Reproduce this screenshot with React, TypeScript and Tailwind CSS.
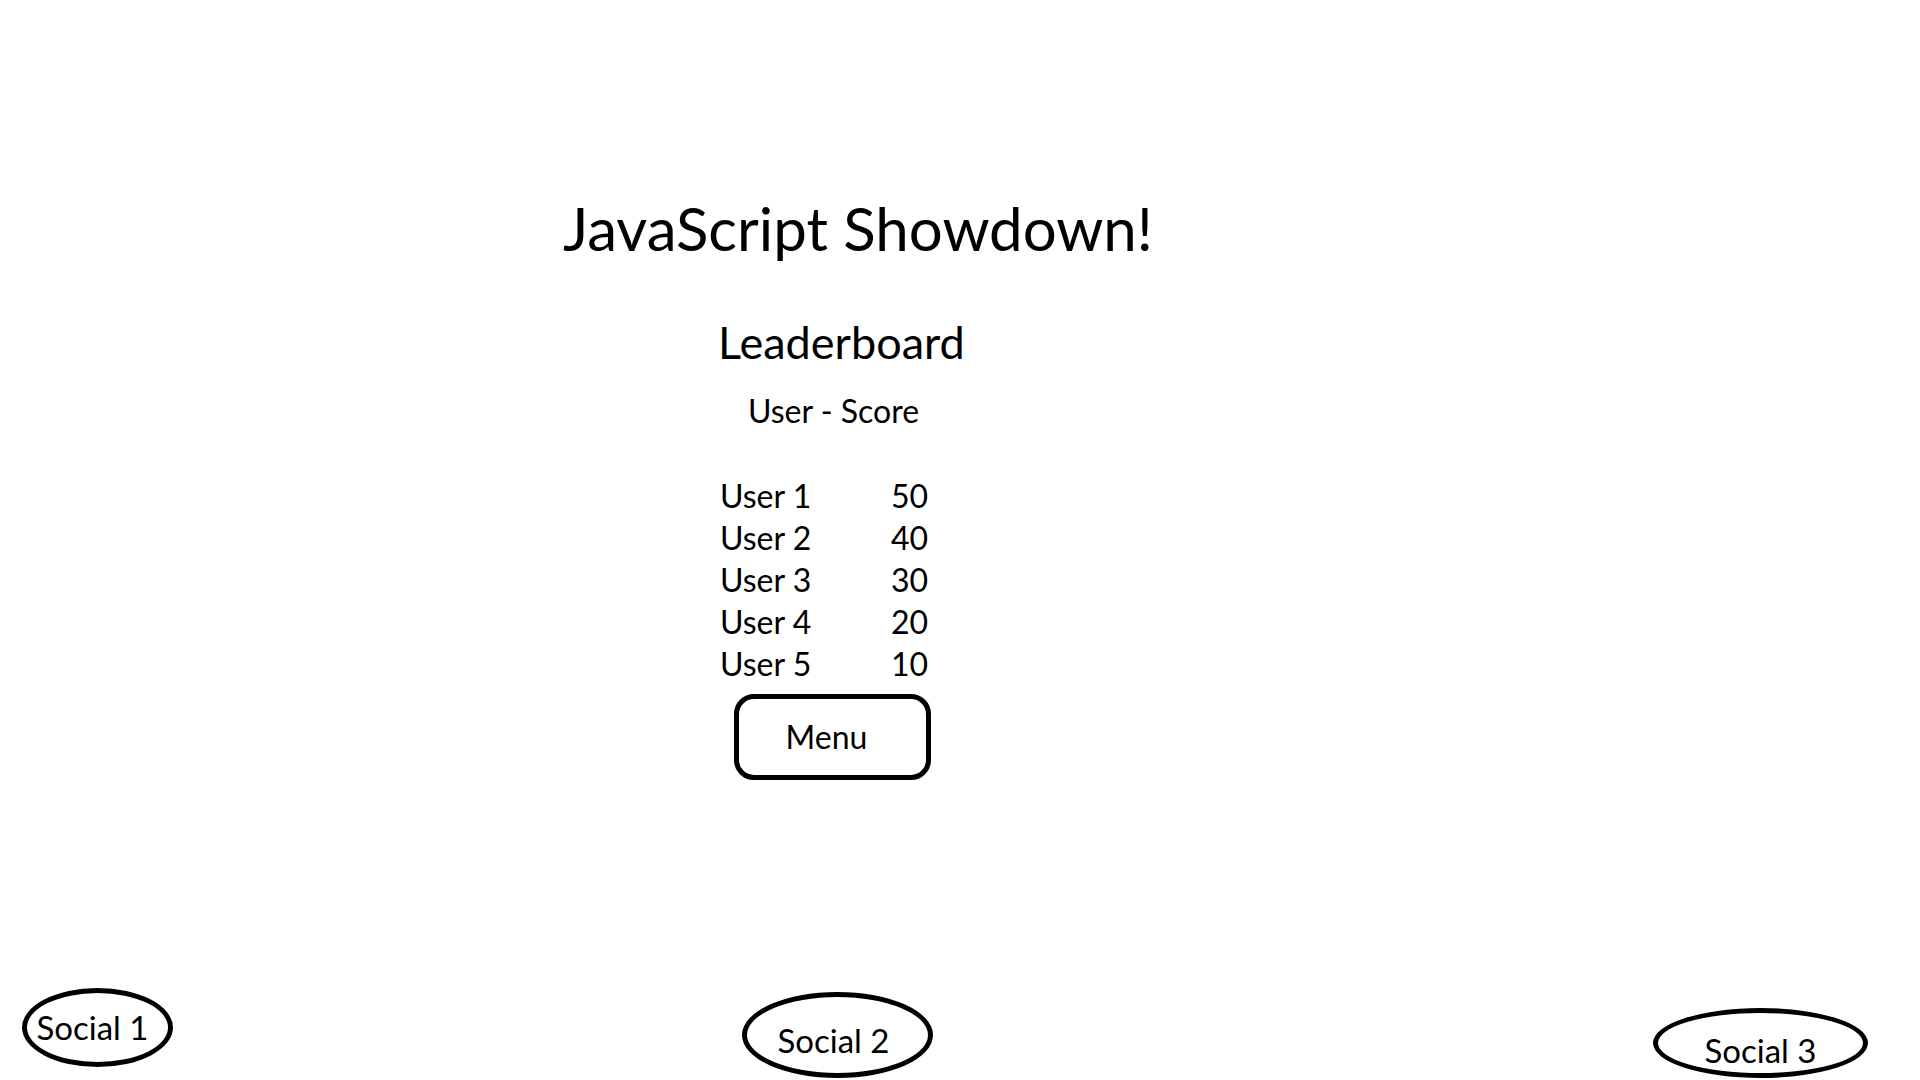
const scores = [
  { user: "User 1", score: 50 },
  { user: "User 2", score: 40 },
  { user: "User 3", score: 30 },
  { user: "User 4", score: 20 },
  { user: "User 5", score: 10 },
];

const Social = ({ label, className }: { label: string; className: string }) => (
  <div
    className={`flex items-center justify-center rounded-[50%] border-[5px] border-black text-[33px] leading-none ${className}`}
  >
    {label}
  </div>
);

const App = () => {
  return (
    <div className="h-[1080px] overflow-hidden bg-white text-black font-['Lato',sans-serif]">
      <main className="flex flex-col pt-[198px]">
        <h1 className="ml-[563px] text-[60px] leading-none font-normal">JavaScript Showdown!</h1>
        <h2 className="ml-[718px] mt-[62px] text-[45px] leading-none">Leaderboard</h2>
        <p className="ml-[748px] mt-[30px] text-[32px] leading-none">User - Score</p>

        {/* Score table */}
        <div className="ml-[720px] mt-[48px] grid grid-cols-[171px_auto] w-fit text-[32px] leading-[42px]">
          {scores.map((row) => (
            <div key={row.user} className="contents">
              <span>{row.user}</span>
              <span>{row.score}</span>
            </div>
          ))}
        </div>

        <button className="ml-[734px] mt-[9px] flex h-[86px] w-[197px] items-center justify-center rounded-[20px] border-[5px] border-black pr-[12px] text-[32px] leading-none">
          Menu
        </button>

        {/* Footer socials */}
        <footer className="mt-[208px] flex pl-[22px]">
          <Social label="Social 1" className="h-[79px] w-[151px] pr-[10px]" />
          <Social label="Social 2" className="ml-[569px] mt-[4px] h-[86px] w-[191px] pt-[10px] pr-[8px]" />
          <Social label="Social 3" className="ml-[720px] mt-[20px] h-[70px] w-[215px] pt-[14px]" />
        </footer>
      </main>
    </div>
  );
};

export default App;
